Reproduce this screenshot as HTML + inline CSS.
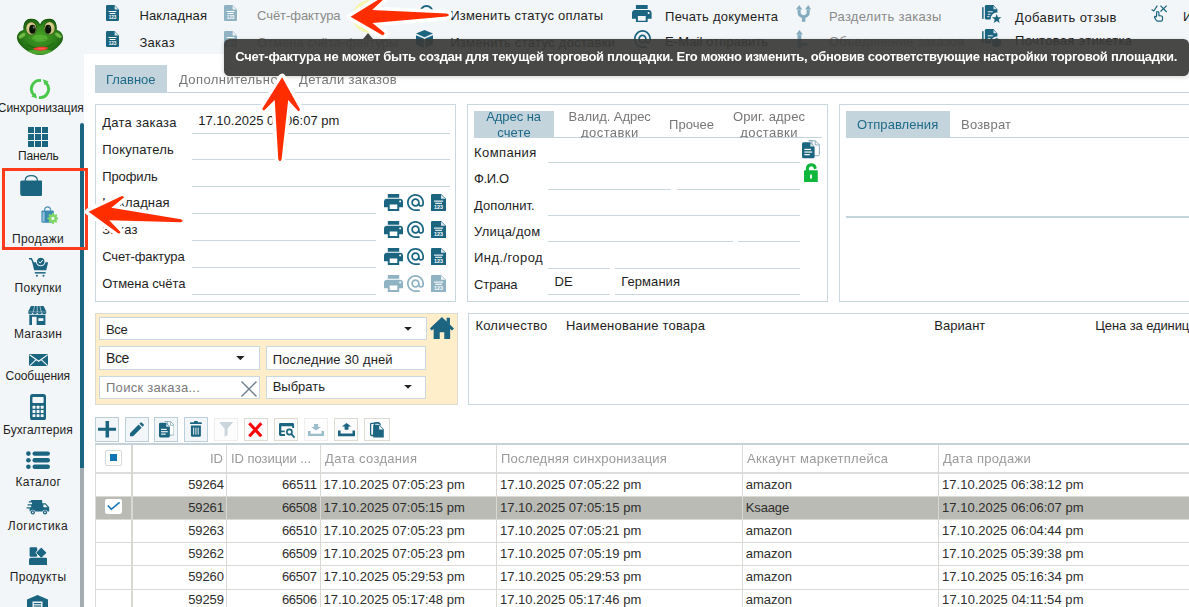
<!DOCTYPE html>
<html lang="ru"><head><meta charset="utf-8"><title>Продажи</title>
<style>
*{box-sizing:border-box;margin:0;padding:0}
html,body{width:1189px;height:607px;overflow:hidden;background:#f3f6f8;font-family:"Liberation Sans",sans-serif;font-size:13px;color:#1e1e1e;letter-spacing:.25px}
.a{position:absolute}
.t{position:absolute;white-space:nowrap;line-height:16px}
.g{color:#8a8a8a}
.ul{position:absolute;height:1px;background:#c9d8df}
.card{position:absolute;border:1px solid #c9d8df;background:#fff}
.sb{position:absolute;left:0;width:76px;text-align:center;white-space:nowrap;line-height:14px;letter-spacing:0}
.num{letter-spacing:.1px}
.inp{position:absolute;background:#fff;border:1px solid #c9d8df}
.btn{position:absolute;top:417.2px;width:24px;height:24.4px;border:1px solid #bccfd8;background:#f3f6f8}
.btn.l{border-color:#dedbd3;background:#fcfcfc;top:417.9px;height:23.5px}.btn.d{border-color:#eeeeec;background:#fdfdfd}
.hl{position:absolute;left:95px;width:1100px;height:1px;background:#dbd9d3}
.vl{position:absolute;top:445px;height:170px;width:2px;background:#dad8d2}
.th{position:absolute;top:451px;white-space:nowrap;color:#9a9a9a;line-height:16px}
.td{position:absolute;white-space:nowrap;line-height:16px;color:#2b2b2b}
</style></head><body>
<div id="sidebar"><svg class="a" style="left:10px;top:10px" width="60" height="52" viewBox="0 0 700 607" >
<defs>
<radialGradient id="fg" cx="50%" cy="48%" r="62%"><stop offset="0" stop-color="#48a228"/><stop offset=".55" stop-color="#2d801a"/><stop offset="1" stop-color="#13500d"/></radialGradient>
<radialGradient id="fe" cx="45%" cy="40%" r="65%"><stop offset="0" stop-color="#eee4a4"/><stop offset="1" stop-color="#b9ad68"/></radialGradient>
<filter id="fb" x="-30%" y="-30%" width="160%" height="160%"><feGaussianBlur stdDeviation="9"/></filter>
<clipPath id="fc"><path d="M350 165C370 120 410 100 465 102C520 104 550 150 545 230C600 250 625 290 618 335C612 395 520 480 420 515C380 530 320 530 280 515C180 480 88 395 82 335C75 290 100 250 158 230C150 150 185 104 240 102C295 100 330 120 350 165Z"/></clipPath>
</defs>
<path d="M350 165C370 120 410 100 465 102C520 104 550 150 545 230C600 250 625 290 618 335C612 395 520 480 420 515C380 530 320 530 280 515C180 480 88 395 82 335C75 290 100 250 158 230C150 150 185 104 240 102C295 100 330 120 350 165Z" fill="url(#fg)"/>
<g clip-path="url(#fc)">
<ellipse cx="140" cy="300" rx="45" ry="22" transform="rotate(-35 140 300)" fill="#8ed458" opacity=".75" filter="url(#fb)"/>
<ellipse cx="565" cy="295" rx="45" ry="22" transform="rotate(35 565 295)" fill="#8ed458" opacity=".75" filter="url(#fb)"/>
<ellipse cx="350" cy="330" rx="90" ry="40" fill="#5cb838" opacity=".7" filter="url(#fb)"/>
<ellipse cx="350" cy="490" rx="170" ry="30" fill="#58b434" opacity=".8" filter="url(#fb)"/>
<path d="M160 230C150 150 185 110 240 108C295 106 325 130 345 175" fill="none" stroke="#124a0c" stroke-width="14" opacity=".55" filter="url(#fb)"/>
<path d="M543 230C550 150 520 110 465 108C410 106 378 130 358 175" fill="none" stroke="#124a0c" stroke-width="14" opacity=".55" filter="url(#fb)"/>
</g>
<ellipse cx="248" cy="213" rx="67" ry="82" fill="#2a5e12"/><ellipse cx="462" cy="210" rx="67" ry="82" fill="#2a5e12"/>
<ellipse cx="248" cy="216" rx="59" ry="73" fill="url(#fe)"/><ellipse cx="462" cy="213" rx="59" ry="73" fill="url(#fe)"/>
<ellipse cx="262" cy="224" rx="38" ry="52" fill="#071404"/><ellipse cx="445" cy="224" rx="36" ry="52" fill="#071404"/>
<ellipse cx="278" cy="200" rx="12" ry="18" fill="#6b7a70" opacity=".8"/><ellipse cx="458" cy="198" rx="9" ry="14" fill="#3b4a40" opacity=".7"/>
<circle cx="287" cy="345" r="5" fill="#145010"/><circle cx="405" cy="345" r="5" fill="#145010"/>
<path d="M195 398C250 440 300 446 350 443C420 440 470 425 512 385" fill="none" stroke="#0f4a0a" stroke-width="7" stroke-linecap="round"/>
<path d="M266 450C320 424 400 424 446 440C425 482 300 486 266 450Z" fill="#ef3a32"/>
<path d="M300 452C330 440 390 440 415 448C400 462 320 464 300 452Z" fill="#ff6258" opacity=".8"/>
</svg><svg class="a" style="left:29px;top:77.9px" width="22" height="22" viewBox="0 0 22 22" ><g fill="none" stroke="#48c848" stroke-width="2.9"><path d="M12.04 2.51A8.55 8.55 0 0 0 4.95 17.05"/><path d="M9.96 19.49A8.55 8.55 0 0 0 17.05 4.95"/></g><path d="M2.3 18.6L8.1 20.5L6.5 15Z" fill="#48c848"/><path d="M13.9 1.25L19.7 3.6L15.5 7Z" fill="#48c848"/></svg><div class="t" style="left:-2.20px;top:100px;letter-spacing:-0.079px;font-size:12px">Синхронизация</div><div class="a" style="left:80px;top:123px;width:4px;height:345px;background:#1b6581;border-radius:2px 2px 0 0"></div><div class="a" style="left:80px;top:468px;width:4px;height:140px;background:#a3adb1"></div><svg class="a" style="left:28px;top:127px" width="20" height="20" viewBox="0 0 20 20" ><rect x="0" y="0" width="6" height="6" fill="#1b6581"/><rect x="7" y="0" width="6" height="6" fill="#1b6581"/><rect x="14" y="0" width="6" height="6" fill="#1b6581"/><rect x="0" y="7" width="6" height="6" fill="#1b6581"/><rect x="7" y="7" width="6" height="6" fill="#1b6581"/><rect x="14" y="7" width="6" height="6" fill="#1b6581"/><rect x="0" y="14" width="6" height="6" fill="#1b6581"/><rect x="7" y="14" width="6" height="6" fill="#1b6581"/><rect x="14" y="14" width="6" height="6" fill="#1b6581"/></svg><div class="t" style="left:17.90px;top:148px;letter-spacing:-0.110px;font-size:12px">Панель</div><svg class="a" style="left:19.6px;top:175px" width="22.6" height="21.4" viewBox="0 0 22.6 21.4" ><path d="M1.8 5.4H20.8Q22.4 5.4 22.4 7V18.6Q22.4 21.2 19.8 21.2H2.8Q.2 21.2 .2 18.6V7Q.2 5.4 1.8 5.4Z" fill="#1b6581"/><path d="M5.2 6.4V5.2Q5.6 .7 11.3 .7Q17 .7 17.4 5.2V6.4" fill="none" stroke="#1b6581" stroke-width="1.2"/></svg><svg class="a" style="left:40.6px;top:205.6px" width="17" height="18" viewBox="0 0 17 18" ><path d="M1.4 4.6H11.8Q12.8 4.6 12.8 5.6V15.6Q12.8 16.8 11.6 16.8H1.6Q.4 16.8 .4 15.6V5.6Q.4 4.6 1.4 4.6Z" fill="#3d8bb3"/><path d="M1.5 6.2H3.6V15.6H1.5Z" fill="#a9cfe2" opacity=".8"/><path d="M3.6 5.4V4Q3.8 .9 6.6 .9Q9.4 .9 9.6 4V5.4" fill="none" stroke="#4f93b5" stroke-width="1.1"/><rect x="10.9" y="6.9" width="2" height="2.2" rx=".6" fill="#7fd76a" transform="rotate(0 11.9 12.4)"/><rect x="10.9" y="6.9" width="2" height="2.2" rx=".6" fill="#7fd76a" transform="rotate(45 11.9 12.4)"/><rect x="10.9" y="6.9" width="2" height="2.2" rx=".6" fill="#7fd76a" transform="rotate(90 11.9 12.4)"/><rect x="10.9" y="6.9" width="2" height="2.2" rx=".6" fill="#7fd76a" transform="rotate(135 11.9 12.4)"/><rect x="10.9" y="6.9" width="2" height="2.2" rx=".6" fill="#7fd76a" transform="rotate(180 11.9 12.4)"/><rect x="10.9" y="6.9" width="2" height="2.2" rx=".6" fill="#7fd76a" transform="rotate(225 11.9 12.4)"/><rect x="10.9" y="6.9" width="2" height="2.2" rx=".6" fill="#7fd76a" transform="rotate(270 11.9 12.4)"/><rect x="10.9" y="6.9" width="2" height="2.2" rx=".6" fill="#7fd76a" transform="rotate(315 11.9 12.4)"/><circle cx="11.9" cy="12.4" r="4.2" fill="#7fd76a"/><circle cx="11.9" cy="12.4" r="1.6" fill="#f3fbef"/></svg><div class="t" style="left:12.10px;top:231px;letter-spacing:0.233px;font-size:12px">Продажи</div><svg class="a" style="left:28.5px;top:257.3px" width="19.4" height="19.8" viewBox="0 0 19.4 19.8" ><path d="M0 1.7H2.4L4.4 6" fill="none" stroke="#1b6581" stroke-width="1.5"/><path d="M3.2 5.2H19.2L17.2 13.3H5.2Z" fill="#1b6581"/><circle cx="11.7" cy="4.5" r="4.3" fill="#1b6581" stroke="#f3f6f8" stroke-width="1.1"/><path d="M9.7 4.6L11.2 6L13.8 3" stroke="#f3f6f8" stroke-width="1" fill="none"/><rect x="5.8" y="15.1" width="10.8" height="1.5" fill="#1b6581"/><circle cx="7.9" cy="18.8" r="1" fill="#1b6581"/><circle cx="14.5" cy="18.8" r="1" fill="#1b6581"/></svg><div class="t" style="left:14.60px;top:280px;letter-spacing:0.308px;font-size:12px">Покупки</div><svg class="a" style="left:28.2px;top:306px" width="18.5" height="19.2" viewBox="0 0 18.5 19.2" ><path d="M2.9 0H15.6L18.5 6Q18.5 8.2 16.2 8.2Q14.1 8.2 13.9 6.6Q13.7 8.2 11.6 8.2Q9.5 8.2 9.25 6.6Q9 8.2 6.9 8.2Q4.8 8.2 4.6 6.6Q4.4 8.2 2.3 8.2Q0 8.2 0 6Z" fill="#1b6581"/><path d="M6.6 0L5.2 6M11.9 0L13.3 6M9.25 0V6" stroke="#f3f6f8" stroke-width=".8" opacity=".75"/><rect x="0" y="5.6" width="18.5" height=".7" fill="#f3f6f8" opacity=".55"/><path d="M1.3 8.8H17.4V19.2H1.3Z" fill="#1b6581"/><rect x="4" y="10.8" width="4.6" height="8.4" fill="#f3f6f8"/><rect x="10.4" y="12.2" width="5" height="2.8" fill="#f3f6f8"/></svg><div class="t" style="left:13.90px;top:326px;letter-spacing:0.267px;font-size:12px">Магазин</div><svg class="a" style="left:28.6px;top:354px" width="19.4" height="12.4" viewBox="0 0 20 13"  preserveAspectRatio="none"><rect width="20" height="13" rx=".8" fill="#1b6581"/><path d="M.6 .8L10 7.6L19.4 .8M.6 12.4L7.4 6M19.4 12.4L12.6 6" fill="none" stroke="#f3f6f8" stroke-width="1.1"/></svg><div class="t" style="left:5.60px;top:368px;letter-spacing:-0.081px;font-size:12px">Сообщения</div><svg class="a" style="left:29.9px;top:394px" width="16" height="26.4" viewBox="0 0 16 26.4" ><rect width="16" height="26.4" rx="2.6" fill="#1b6581"/><rect x="2.4" y="3" width="11.2" height="6" rx=".8" fill="#f3f6f8"/><rect x="2.5" y="11.8" width="2.9" height="2.9" rx=".5" fill="#f3f6f8"/><rect x="6.6" y="11.8" width="2.9" height="2.9" rx=".5" fill="#f3f6f8"/><rect x="10.7" y="11.8" width="2.9" height="2.9" rx=".5" fill="#f3f6f8"/><rect x="2.5" y="16.0" width="2.9" height="2.9" rx=".5" fill="#f3f6f8"/><rect x="6.6" y="16.0" width="2.9" height="2.9" rx=".5" fill="#f3f6f8"/><rect x="10.7" y="16.0" width="2.9" height="2.9" rx=".5" fill="#f3f6f8"/><rect x="2.5" y="20.200000000000003" width="2.9" height="2.9" rx=".5" fill="#f3f6f8"/><rect x="6.6" y="20.200000000000003" width="2.9" height="2.9" rx=".5" fill="#f3f6f8"/><rect x="10.7" y="20.200000000000003" width="2.9" height="2.9" rx=".5" fill="#f3f6f8"/></svg><div class="t" style="left:3.00px;top:422px;letter-spacing:0.040px;font-size:12px">Бухгалтерия</div><svg class="a" style="left:26px;top:451px" width="24" height="19" viewBox="0 0 24 19" ><circle cx="2.4" cy="2.6" r="2.3" fill="#1b6581"/><rect x="6.5" y="0.4" width="17.5" height="4.4" rx="2.2" fill="#1b6581"/><circle cx="2.4" cy="9.2" r="2.3" fill="#1b6581"/><rect x="6.5" y="7.0" width="17.5" height="4.4" rx="2.2" fill="#1b6581"/><circle cx="2.4" cy="15.799999999999999" r="2.3" fill="#1b6581"/><rect x="6.5" y="13.6" width="17.5" height="4.4" rx="2.2" fill="#1b6581"/></svg><div class="t" style="left:15.50px;top:474px;letter-spacing:0.275px;font-size:12px">Каталог</div><svg class="a" style="left:26.4px;top:500.2px" width="23.4" height="15" viewBox="0 0 23.4 15" ><path d="M5.4 0H15.6Q16.2 0 16.2 .6V3.2H19.6L23.2 7.2V11.6H21.6A2.7 2.7 0 0 0 16.4 11.6H9.4A2.7 2.7 0 0 0 4.2 11.6H3.6V8.6H.6V7.2H5.2V5.6H1.6V4.2H6V2.6H2.8V1.2H4.8Q4.8 0 5.4 0Z" fill="#1b6581"/><circle cx="6.8" cy="12.4" r="2.1" fill="#1b6581"/><circle cx="19" cy="12.4" r="2.1" fill="#1b6581"/><circle cx="6.8" cy="12.4" r=".8" fill="#f3f6f8"/><circle cx="19" cy="12.4" r=".8" fill="#f3f6f8"/><path d="M17.4 4.4H19.2L21.6 7.2H17.4Z" fill="#f3f6f8"/></svg><div class="t" style="left:7.80px;top:518px;letter-spacing:0.494px;font-size:12px">Логистика</div><svg class="a" style="left:28.8px;top:546.7px" width="18.6" height="18.5" viewBox="0 0 18.6 18.5" ><rect x=".6" y=".3" width="7.6" height="9.4" rx="1.2" fill="#1b6581"/><rect x="8.3" y="1.7" width="8" height="8" rx="1.1" transform="rotate(45 12.3 5.7)" fill="#1b6581" stroke="#f3f6f8" stroke-width=".9"/><rect x="0" y="10.8" width="18.6" height="7.7" rx="2" fill="#1b6581"/></svg><div class="t" style="left:9.80px;top:569px;letter-spacing:0.286px;font-size:12px">Продукты</div><svg class="a" style="left:27px;top:595px" width="21" height="14" viewBox="0 0 21 14" ><path d="M10.5 0L21 4.5V14H0V4.5Z" fill="#1b6581"/><rect x="5.5" y="6.5" width="10" height="8" fill="#f3f6f8"/><rect x="6.8" y="8" width="7.4" height="1.2" fill="#1b6581"/><rect x="6.8" y="10.4" width="7.4" height="1.2" fill="#1b6581"/></svg></div><!--/sidebar-->
<div class="a" style="left:84px;top:54px;width:1110px;height:560px;background:#fff"></div>
<div id="toolbar"><svg class="a" style="left:106px;top:5px" width="13" height="16" viewBox="0 0 13 16"  preserveAspectRatio="none"><path d="M1.2 0H8.6L13 4.4V14.8Q13 16 11.8 16H1.2Q0 16 0 14.8V1.2Q0 0 1.2 0Z" fill="#1b6581"/><path d="M8.6 0.6V4.4H12.4Z" fill="#fff" opacity=".85"/><rect x="2.6" y="6" width="7.8" height="1" fill="#fff"/><rect x="3.6" y="8" width="5.8" height="1" fill="#fff"/><text x="6.5" y="13.9" font-family="Liberation Sans, sans-serif" font-size="4.6" font-weight="700" fill="#fff" text-anchor="middle" letter-spacing="0">123</text></svg><svg class="a" style="left:106px;top:31px" width="13" height="16" viewBox="0 0 13 16"  preserveAspectRatio="none"><path d="M1.2 0H8.6L13 4.4V14.8Q13 16 11.8 16H1.2Q0 16 0 14.8V1.2Q0 0 1.2 0Z" fill="#1b6581"/><path d="M8.6 0.6V4.4H12.4Z" fill="#fff" opacity=".85"/><rect x="2.6" y="6" width="7.8" height="1" fill="#fff"/><rect x="3.6" y="8" width="5.8" height="1" fill="#fff"/><text x="6.5" y="13.9" font-family="Liberation Sans, sans-serif" font-size="4.6" font-weight="700" fill="#fff" text-anchor="middle" letter-spacing="0">123</text></svg><div class="t" style="left:139.40px;top:8px;letter-spacing:0.162px">Накладная</div><div class="t" style="left:139.40px;top:35px;letter-spacing:0.300px">Заказ</div><svg class="a" style="left:224px;top:5px" width="13" height="16" viewBox="0 0 13 16"  preserveAspectRatio="none"><path d="M1.2 0H8.6L13 4.4V14.8Q13 16 11.8 16H1.2Q0 16 0 14.8V1.2Q0 0 1.2 0Z" fill="#8fb3c3"/><path d="M8.6 0.6V4.4H12.4Z" fill="#fff" opacity=".85"/><rect x="2.6" y="6" width="7.8" height="1" fill="#fff"/><rect x="3.6" y="8" width="5.8" height="1" fill="#fff"/><text x="6.5" y="13.9" font-family="Liberation Sans, sans-serif" font-size="4.6" font-weight="700" fill="#fff" text-anchor="middle" letter-spacing="0">123</text></svg><svg class="a" style="left:224px;top:31px" width="13" height="16" viewBox="0 0 13 16"  preserveAspectRatio="none"><path d="M1.2 0H8.6L13 4.4V14.8Q13 16 11.8 16H1.2Q0 16 0 14.8V1.2Q0 0 1.2 0Z" fill="#8fb3c3"/><path d="M8.6 0.6V4.4H12.4Z" fill="#fff" opacity=".85"/><rect x="2.6" y="6" width="7.8" height="1" fill="#fff"/><rect x="3.6" y="8" width="5.8" height="1" fill="#fff"/><text x="6.5" y="13.9" font-family="Liberation Sans, sans-serif" font-size="4.6" font-weight="700" fill="#fff" text-anchor="middle" letter-spacing="0">123</text></svg><div class="t" style="left:257.00px;top:8px;letter-spacing:-0.055px;color:#8a8a8a">Счёт-фактура</div><div class="t" style="left:257.00px;top:35px;letter-spacing:0.034px;color:#8a8a8a">Отмена счёта-фактуры</div><svg class="a" style="left:416px;top:3px" width="20" height="20" viewBox="0 0 20 20" ><circle cx="10.5" cy="9" r="6" fill="none" stroke="#1b6581" stroke-width="1.8"/></svg><svg class="a" style="left:416px;top:30px" width="17" height="18" viewBox="0 0 17 18" ><path d="M8.5 0L17 3.6L8.5 7.2L0 3.6Z" fill="#1b6581"/><path d="M0 5.2L7.8 8.5V18L0 14.4Z" fill="#1b6581"/><path d="M17 5.2L9.2 8.5V18L17 14.4Z" fill="#1b6581"/></svg><div class="t" style="left:450.20px;top:8px;letter-spacing:0.231px">Изменить статус оплаты</div><div class="t" style="left:450.20px;top:35px;letter-spacing:0.283px">Изменить статус доставки</div><svg class="a" style="left:632px;top:4.6px" width="19.6" height="17.8" viewBox="2 3 20 18"  preserveAspectRatio="none"><path d="M19 8H5c-1.66 0-3 1.34-3 3v6h4v4h12v-4h4v-6c0-1.66-1.34-3-3-3zm-3 11H8v-5h8v5zm3-7c-.55 0-1-.45-1-1s.45-1 1-1 1 .45 1 1-.45 1-1 1zm-1-9H6v4h12V3z" fill="#1b6581"/></svg><svg class="a" style="left:634px;top:30px" width="17" height="18" viewBox="2 2 20 20"  preserveAspectRatio="none"><path d="M12 2C6.48 2 2 6.48 2 12s4.48 10 10 10h5v-2h-5c-4.34 0-8-3.66-8-8s3.66-8 8-8 8 3.66 8 8v1.43c0 .79-.71 1.57-1.5 1.57s-1.5-.78-1.5-1.57V12c0-2.76-2.24-5-5-5s-5 2.24-5 5 2.24 5 5 5c1.38 0 2.64-.56 3.54-1.47.65.89 1.77 1.47 2.96 1.47 1.97 0 3.5-1.6 3.5-3.57V12c0-5.52-4.48-10-10-10zm0 13c-1.66 0-3-1.34-3-3s1.34-3 3-3 3 1.34 3 3-1.34 3-3 3z" fill="#1b6581"/></svg><div class="t" style="left:665.10px;top:9px;letter-spacing:0.227px">Печать документа</div><div class="t" style="left:665.10px;top:34px;letter-spacing:0.083px">E-Mail отправить</div><svg class="a" style="left:795.5px;top:4.9px" width="15.3" height="16.8" viewBox="0 0 15.3 16.8" ><path d="M3.1 0L6.3 4.6H0Z" fill="#85acbd"/><path d="M12.2 0L15.3 4.6H9.1Z" fill="#85acbd"/><path d="M3.1 4.4V7.4Q3.1 10.8 7.65 11.8Q12.2 10.8 12.2 7.4V4.4" fill="none" stroke="#85acbd" stroke-width="3.1"/><rect x="5.9" y="11.2" width="3.5" height="5.6" fill="#85acbd"/></svg><svg class="a" style="left:795.9px;top:30px" width="15" height="18" viewBox="0 0 15 18" ><path d="M3.4 0L6.9 4.6H0Z" fill="#85acbd"/><rect x="1.5" y="4.4" width="3.8" height="13.6" fill="#85acbd"/><path d="M5 13H11.5V16.2H5Z" fill="#85acbd"/></svg><div class="t" style="left:829.00px;top:9px;letter-spacing:0.287px;color:#8a8a8a">Разделить заказы</div><div class="t" style="left:829.00px;top:34px;letter-spacing:0.119px;color:#8a8a8a">Объединение заказов</div><svg class="a" style="left:982px;top:4.9px" width="20.4" height="19.2" viewBox="0 0 20.4 19.2" ><rect x=".1" y="2.2" width="1.5" height="11.7" fill="#1b6581"/><path d="M4.2 0H11.4L15.4 4.4V14.5H4.2Q2.9 14.5 2.9 13.2V1.3Q2.9 0 4.2 0Z" fill="#1b6581"/><path d="M11.5 .9V4.3H14.7Z" fill="#f3f6f8" opacity=".9"/><rect x="5.8" y="6.3" width="5" height="1" fill="#f3f6f8"/><rect x="5.8" y="8.9" width="2.7" height=".9" fill="#f3f6f8"/><rect x="5.2" y="11.2" width="2.3" height=".9" fill="#f3f6f8"/><circle cx="14.7" cy="13.7" r="6.1" fill="#f3f6f8"/><path d="M14.70 8.90L15.93 12.20L19.46 12.35L16.70 14.55L17.64 17.95L14.70 16.00L11.76 17.95L12.70 14.55L9.94 12.35L13.47 12.20Z" fill="#1b6581"/></svg><svg class="a" style="left:982px;top:29px" width="20.4" height="19.2" viewBox="0 0 20.4 19.2" ><rect x=".1" y="2.2" width="1.5" height="11.7" fill="#1b6581"/><path d="M4.2 0H11.4L15.4 4.4V14.5H4.2Q2.9 14.5 2.9 13.2V1.3Q2.9 0 4.2 0Z" fill="#1b6581"/><path d="M11.5 .9V4.3H14.7Z" fill="#f3f6f8" opacity=".9"/><rect x="5.8" y="6.3" width="5" height="1" fill="#f3f6f8"/><rect x="5.8" y="8.9" width="2.7" height=".9" fill="#f3f6f8"/><rect x="5.2" y="11.2" width="2.3" height=".9" fill="#f3f6f8"/><circle cx="14.7" cy="13.7" r="6.1" fill="#f3f6f8"/><path d="M14.7 9L19 11V16.2L14.7 18.4L10.4 16.2V11Z" fill="#1b6581"/></svg><div class="t" style="left:1015.10px;top:10px;letter-spacing:0.396px">Добавить отзыв</div><div class="t" style="left:1015.10px;top:33px;letter-spacing:0.306px">Почтовая этикетка</div><svg class="a" style="left:1150.6px;top:4.6px" width="17" height="17" viewBox="0 0 17 17" ><path d="M.6 4.5L2.8 6L6.3 .6" fill="none" stroke="#1b6581" stroke-width="1.2"/><path d="M9.5 .6L15.7 7M15.7 .6L9.5 6.5" stroke="#1b6581" stroke-width="1.2"/><path d="M5.6 11.6V7.6Q5.6 6.5 6.75 6.5Q7.9 6.5 7.9 7.6V10.6L10.6 11Q11.5 11.2 11.5 12.1V14.6Q11.5 16.2 9.9 16.2H7Q5.8 16.2 5.2 15.2L3.6 12.6Q3.2 11.6 4.2 11.3Q5 11.2 5.6 12.2" fill="none" stroke="#1b6581" stroke-width="1.2" stroke-linejoin="round"/></svg><div class="t" style="left:1183.10px;top:9px;letter-spacing:0.000px">Импорт</div></div><!--/toolbar-->
<div id="tabs"><div class="a" style="left:95px;top:92px;width:1100px;height:1px;background:#c3d4dc"></div><div class="a" style="left:95px;top:65px;width:72px;height:28px;background:#c3d4dc"></div><div class="t" style="left:106.10px;top:72px;letter-spacing:-0.025px;color:#1f6a88;will-change:transform">Главное</div><div class="t" style="left:178.60px;top:72px;letter-spacing:0.421px;color:#777;will-change:transform">Дополнительно</div><div class="t" style="left:298.90px;top:72px;letter-spacing:0.338px;color:#777;will-change:transform">Детали заказов</div></div><!--/tabs-->
<div id="cards"><div class="card" style="left:95px;top:104px;width:361px;height:198px"></div><div class="t" style="left:102.20px;top:115px;letter-spacing:0.245px">Дата заказа</div><div class="ul" style="left:192px;top:132.9px;width:258px"></div><div class="t" style="left:102.20px;top:142px;letter-spacing:0.206px">Покупатель</div><div class="ul" style="left:192px;top:159.2px;width:258px"></div><div class="t" style="left:102.20px;top:169px;letter-spacing:-0.100px">Профиль</div><div class="ul" style="left:192px;top:185.5px;width:258px"></div><div class="t" style="left:102.20px;top:195px;letter-spacing:0.138px">Накладная</div><div class="ul" style="left:192px;top:212.7px;width:184px"></div><svg class="a" style="left:384px;top:194px" width="19" height="17" viewBox="2 3 20 18"  preserveAspectRatio="none"><path d="M19 8H5c-1.66 0-3 1.34-3 3v6h4v4h12v-4h4v-6c0-1.66-1.34-3-3-3zm-3 11H8v-5h8v5zm3-7c-.55 0-1-.45-1-1s.45-1 1-1 1 .45 1 1-.45 1-1 1zm-1-9H6v4h12V3z" fill="#1b6581"/></svg><svg class="a" style="left:407px;top:194px" width="17" height="17" viewBox="2 2 20 20"  preserveAspectRatio="none"><path d="M12 2C6.48 2 2 6.48 2 12s4.48 10 10 10h5v-2h-5c-4.34 0-8-3.66-8-8s3.66-8 8-8 8 3.66 8 8v1.43c0 .79-.71 1.57-1.5 1.57s-1.5-.78-1.5-1.57V12c0-2.76-2.24-5-5-5s-5 2.24-5 5 2.24 5 5 5c1.38 0 2.64-.56 3.54-1.47.65.89 1.77 1.47 2.96 1.47 1.97 0 3.5-1.6 3.5-3.57V12c0-5.52-4.48-10-10-10zm0 13c-1.66 0-3-1.34-3-3s1.34-3 3-3 3 1.34 3 3-1.34 3-3 3z" fill="#1b6581"/></svg><svg class="a" style="left:431px;top:193.7px" width="15.2" height="17.5" viewBox="0 0 13 16"  preserveAspectRatio="none"><path d="M1.2 0H8.6L13 4.4V14.8Q13 16 11.8 16H1.2Q0 16 0 14.8V1.2Q0 0 1.2 0Z" fill="#1b6581"/><path d="M8.6 0.6V4.4H12.4Z" fill="#fff" opacity=".85"/><rect x="2.6" y="6" width="7.8" height="1" fill="#fff"/><rect x="3.6" y="8" width="5.8" height="1" fill="#fff"/><text x="6.5" y="13.9" font-family="Liberation Sans, sans-serif" font-size="4.6" font-weight="700" fill="#fff" text-anchor="middle" letter-spacing="0">123</text></svg><div class="t" style="left:102.20px;top:222px;letter-spacing:0.300px">Заказ</div><div class="ul" style="left:192px;top:239.8px;width:184px"></div><svg class="a" style="left:384px;top:221px" width="19" height="17" viewBox="2 3 20 18"  preserveAspectRatio="none"><path d="M19 8H5c-1.66 0-3 1.34-3 3v6h4v4h12v-4h4v-6c0-1.66-1.34-3-3-3zm-3 11H8v-5h8v5zm3-7c-.55 0-1-.45-1-1s.45-1 1-1 1 .45 1 1-.45 1-1 1zm-1-9H6v4h12V3z" fill="#1b6581"/></svg><svg class="a" style="left:407px;top:221px" width="17" height="17" viewBox="2 2 20 20"  preserveAspectRatio="none"><path d="M12 2C6.48 2 2 6.48 2 12s4.48 10 10 10h5v-2h-5c-4.34 0-8-3.66-8-8s3.66-8 8-8 8 3.66 8 8v1.43c0 .79-.71 1.57-1.5 1.57s-1.5-.78-1.5-1.57V12c0-2.76-2.24-5-5-5s-5 2.24-5 5 2.24 5 5 5c1.38 0 2.64-.56 3.54-1.47.65.89 1.77 1.47 2.96 1.47 1.97 0 3.5-1.6 3.5-3.57V12c0-5.52-4.48-10-10-10zm0 13c-1.66 0-3-1.34-3-3s1.34-3 3-3 3 1.34 3 3-1.34 3-3 3z" fill="#1b6581"/></svg><svg class="a" style="left:431px;top:220.7px" width="15.2" height="17.5" viewBox="0 0 13 16"  preserveAspectRatio="none"><path d="M1.2 0H8.6L13 4.4V14.8Q13 16 11.8 16H1.2Q0 16 0 14.8V1.2Q0 0 1.2 0Z" fill="#1b6581"/><path d="M8.6 0.6V4.4H12.4Z" fill="#fff" opacity=".85"/><rect x="2.6" y="6" width="7.8" height="1" fill="#fff"/><rect x="3.6" y="8" width="5.8" height="1" fill="#fff"/><text x="6.5" y="13.9" font-family="Liberation Sans, sans-serif" font-size="4.6" font-weight="700" fill="#fff" text-anchor="middle" letter-spacing="0">123</text></svg><div class="t" style="left:102.20px;top:249px;letter-spacing:-0.118px">Счет-фактура</div><div class="ul" style="left:192px;top:266.9px;width:184px"></div><svg class="a" style="left:384px;top:248px" width="19" height="17" viewBox="2 3 20 18"  preserveAspectRatio="none"><path d="M19 8H5c-1.66 0-3 1.34-3 3v6h4v4h12v-4h4v-6c0-1.66-1.34-3-3-3zm-3 11H8v-5h8v5zm3-7c-.55 0-1-.45-1-1s.45-1 1-1 1 .45 1 1-.45 1-1 1zm-1-9H6v4h12V3z" fill="#1b6581"/></svg><svg class="a" style="left:407px;top:248px" width="17" height="17" viewBox="2 2 20 20"  preserveAspectRatio="none"><path d="M12 2C6.48 2 2 6.48 2 12s4.48 10 10 10h5v-2h-5c-4.34 0-8-3.66-8-8s3.66-8 8-8 8 3.66 8 8v1.43c0 .79-.71 1.57-1.5 1.57s-1.5-.78-1.5-1.57V12c0-2.76-2.24-5-5-5s-5 2.24-5 5 2.24 5 5 5c1.38 0 2.64-.56 3.54-1.47.65.89 1.77 1.47 2.96 1.47 1.97 0 3.5-1.6 3.5-3.57V12c0-5.52-4.48-10-10-10zm0 13c-1.66 0-3-1.34-3-3s1.34-3 3-3 3 1.34 3 3-1.34 3-3 3z" fill="#1b6581"/></svg><svg class="a" style="left:431px;top:247.7px" width="15.2" height="17.5" viewBox="0 0 13 16"  preserveAspectRatio="none"><path d="M1.2 0H8.6L13 4.4V14.8Q13 16 11.8 16H1.2Q0 16 0 14.8V1.2Q0 0 1.2 0Z" fill="#1b6581"/><path d="M8.6 0.6V4.4H12.4Z" fill="#fff" opacity=".85"/><rect x="2.6" y="6" width="7.8" height="1" fill="#fff"/><rect x="3.6" y="8" width="5.8" height="1" fill="#fff"/><text x="6.5" y="13.9" font-family="Liberation Sans, sans-serif" font-size="4.6" font-weight="700" fill="#fff" text-anchor="middle" letter-spacing="0">123</text></svg><div class="t" style="left:102.20px;top:276px;letter-spacing:-0.032px">Отмена счёта</div><div class="ul" style="left:192px;top:293.9px;width:184px"></div><svg class="a" style="left:384px;top:275px" width="19" height="17" viewBox="2 3 20 18"  preserveAspectRatio="none"><path d="M19 8H5c-1.66 0-3 1.34-3 3v6h4v4h12v-4h4v-6c0-1.66-1.34-3-3-3zm-3 11H8v-5h8v5zm3-7c-.55 0-1-.45-1-1s.45-1 1-1 1 .45 1 1-.45 1-1 1zm-1-9H6v4h12V3z" fill="#8fb3c3"/></svg><svg class="a" style="left:407px;top:275px" width="17" height="17" viewBox="2 2 20 20"  preserveAspectRatio="none"><path d="M12 2C6.48 2 2 6.48 2 12s4.48 10 10 10h5v-2h-5c-4.34 0-8-3.66-8-8s3.66-8 8-8 8 3.66 8 8v1.43c0 .79-.71 1.57-1.5 1.57s-1.5-.78-1.5-1.57V12c0-2.76-2.24-5-5-5s-5 2.24-5 5 2.24 5 5 5c1.38 0 2.64-.56 3.54-1.47.65.89 1.77 1.47 2.96 1.47 1.97 0 3.5-1.6 3.5-3.57V12c0-5.52-4.48-10-10-10zm0 13c-1.66 0-3-1.34-3-3s1.34-3 3-3 3 1.34 3 3-1.34 3-3 3z" fill="#8fb3c3"/></svg><svg class="a" style="left:431px;top:274.7px" width="15.2" height="17.5" viewBox="0 0 13 16"  preserveAspectRatio="none"><path d="M1.2 0H8.6L13 4.4V14.8Q13 16 11.8 16H1.2Q0 16 0 14.8V1.2Q0 0 1.2 0Z" fill="#8fb3c3"/><path d="M8.6 0.6V4.4H12.4Z" fill="#fff" opacity=".85"/><rect x="2.6" y="6" width="7.8" height="1" fill="#fff"/><rect x="3.6" y="8" width="5.8" height="1" fill="#fff"/><text x="6.5" y="13.9" font-family="Liberation Sans, sans-serif" font-size="4.6" font-weight="700" fill="#fff" text-anchor="middle" letter-spacing="0">123</text></svg><div class="t" style="left:198.30px;top:113px;letter-spacing:0.002px">17.10.2025 06:06:07 pm</div><div class="card" style="left:467px;top:104px;width:361px;height:198px"></div><div class="a" style="left:474px;top:137px;width:348px;height:1px;background:#c3d4dc"></div><div class="a" style="left:474px;top:111px;width:80px;height:26.5px;background:#c3d4dc"></div><div class="a" style="left:470px;top:105px;width:356px;height:32.5px;overflow:hidden;will-change:transform"><div class="t" style="left:16.20px;top:4px;letter-spacing:-0.050px;color:#1f6a88">Адрес на</div><div class="t" style="left:27.30px;top:20px;letter-spacing:0.087px;color:#1f6a88">счете</div><div class="t" style="left:98.60px;top:4px;letter-spacing:-0.050px;color:#777">Валид. Адрес</div><div class="t" style="left:111.10px;top:20px;letter-spacing:0.414px;color:#777">доставки</div><div class="t" style="left:262.90px;top:4px;letter-spacing:0.145px;color:#777">Ориг. адрес</div><div class="t" style="left:270.30px;top:20px;letter-spacing:0.414px;color:#777">доставки</div></div><div class="t" style="left:668.70px;top:117px;letter-spacing:0.050px;color:#777;will-change:transform">Прочее</div><div class="t" style="left:474.10px;top:145px;letter-spacing:0.386px">Компания</div><div class="ul" style="left:548px;top:161.7px;width:252px"></div><div class="t" style="left:474.10px;top:171px;letter-spacing:-0.387px">Ф.И.О</div><div class="ul" style="left:548px;top:188.9px;width:123px"></div><div class="ul" style="left:677px;top:188.9px;width:123px"></div><div class="t" style="left:474.10px;top:198px;letter-spacing:0.025px">Дополнит.</div><div class="ul" style="left:548px;top:214.5px;width:252px"></div><div class="t" style="left:474.10px;top:224px;letter-spacing:0.213px">Улица/дом</div><div class="ul" style="left:548px;top:240.6px;width:184.5px"></div><div class="ul" style="left:738px;top:240.6px;width:62px"></div><div class="t" style="left:474.10px;top:250px;letter-spacing:0.411px">Инд./город</div><div class="ul" style="left:548px;top:267.8px;width:62px"></div><div class="ul" style="left:615px;top:267.8px;width:185px"></div><div class="t" style="left:474.10px;top:277px;letter-spacing:-0.150px">Страна</div><div class="ul" style="left:548px;top:293.9px;width:62px"></div><div class="ul" style="left:615px;top:293.9px;width:185px"></div><div class="t" style="left:554.60px;top:274px;letter-spacing:0.000px">DE</div><div class="t" style="left:621.30px;top:274px;letter-spacing:0.057px">Германия</div><svg class="a" style="left:802px;top:140px" width="18" height="18.5" viewBox="0 0 18 18" ><path d="M6.7 .5H13.4L17.4 4.5V14.2Q17.4 15.5 16.1 15.5H10V.5Z" fill="#fff" stroke="#7fa3b3" stroke-width=".9"/><path d="M13.2 .8V4.7H17.1" fill="none" stroke="#7fa3b3" stroke-width=".9"/><path d="M1.5 2H8.2L12.6 6.4V16.5Q12.6 18 11.1 18H1.5Q0 18 0 16.5V3.5Q0 2 1.5 2Z" fill="#1b6581"/><path d="M8.4 2.7V6.3H12Z" fill="#fff" opacity=".85"/><rect x="2.4" y="8.6" width="6.6" height="1.2" fill="#fff"/><rect x="2.4" y="11.2" width="7.8" height="1.2" fill="#fff"/><rect x="2.4" y="13.8" width="5.4" height="1.2" fill="#fff"/></svg><svg class="a" style="left:804.2px;top:162.8px" width="14" height="19.2" viewBox="0 0 14 19.2" ><rect x="0" y="7.2" width="13.8" height="12" rx=".8" fill="#0eb73a"/><path d="M3.4 8V5.8Q3.4 1.7 7.2 1.7Q10.4 1.7 11.1 4.6" fill="none" stroke="#0eb73a" stroke-width="3.1" stroke-linecap="round"/><path d="M6.2 11.6H7.8L8 15.6H6Z" fill="#fff"/></svg><div class="card" style="left:839px;top:104px;width:360px;height:198px"></div><div class="a" style="left:846px;top:137px;width:350px;height:1px;background:#c3d4dc"></div><div class="a" style="left:846px;top:111px;width:104px;height:26.5px;background:#c3d4dc"></div><div class="t" style="left:857.00px;top:117px;letter-spacing:0.075px;color:#1f6a88;will-change:transform">Отправления</div><div class="t" style="left:961.40px;top:117px;letter-spacing:0.208px;color:#777;will-change:transform">Возврат</div><div class="a" style="left:846px;top:216px;width:350px;height:1.5px;background:#c3d4dc"></div></div><!--/cards-->
<div id="filter"><div class="a" style="left:95px;top:313px;width:363px;height:92px;background:#ffeec9;border:1px solid #d9dcd3"></div><div class="inp" style="left:99px;top:317px;width:328px;height:23px"></div><div class="inp" style="left:99px;top:346px;width:161px;height:24px"></div><div class="inp" style="left:99px;top:376px;width:161px;height:23px"></div><div class="inp" style="left:266px;top:346px;width:160px;height:24px"></div><div class="inp" style="left:266px;top:376px;width:160px;height:23px"></div><div class="t" style="left:106.00px;top:322px;letter-spacing:-0.350px">Все</div><div class="t" style="left:106.00px;top:350px;letter-spacing:-0.450px;font-size:14px">Все</div><div class="t" style="left:106.00px;top:380px;letter-spacing:0.279px;color:#7a7a7a">Поиск заказа...</div><div class="t" style="left:272.70px;top:352px;letter-spacing:0.131px">Последние 30 дней</div><div class="t" style="left:272.70px;top:379px;letter-spacing:-0.025px">Выбрать</div><svg class="a" style="left:404.4px;top:327px" width="8" height="3.8" viewBox="0 0 8 4" ><path d="M0 0H8L4 4Z" fill="#222"/></svg><svg class="a" style="left:236.3px;top:356px" width="8.8" height="4.2" viewBox="0 0 8 4" ><path d="M0 0H8L4 4Z" fill="#222"/></svg><svg class="a" style="left:404.4px;top:385px" width="8" height="3.8" viewBox="0 0 8 4" ><path d="M0 0H8L4 4Z" fill="#222"/></svg><svg class="a" style="left:240.6px;top:380.6px" width="16" height="16" viewBox="0 0 16 16" ><path d="M.5 .5L15.5 15.5M15.5 .5L.5 15.5" stroke="#6a7d8e" stroke-width="1.3"/></svg><svg class="a" style="left:430.3px;top:316.6px" width="23.8" height="22.6" viewBox="0 0 24 23" ><path d="M12 0L24.3 11.6L22.4 13.8L20.4 12.1H3.6L1.6 13.8L-.3 11.6Z" fill="#1b6581"/><path d="M16.8 .8H20.2V8.4L16.8 5.2Z" fill="#1b6581"/><path d="M3.6 12H20.4V23H14.4V15.6H9.8V23H3.6Z" fill="#1b6581"/></svg><div class="card" style="left:468px;top:313px;width:740px;height:92px"></div><div class="t" style="left:475.40px;top:318px;letter-spacing:0.233px">Количество</div><div class="t" style="left:566.00px;top:318px;letter-spacing:0.208px">Наименование товара</div><div class="t" style="left:934.30px;top:318px;letter-spacing:0.042px">Вариант</div><div class="t" style="left:1095.30px;top:318px;letter-spacing:-0.104px">Цена за единицу</div></div><!--/filter-->
<div id="table"><div class="btn" style="left:95.1px;width:24px"></div><div class="btn" style="left:125px;width:24px"></div><div class="btn" style="left:154.4px;width:24px"></div><div class="btn" style="left:184px;width:24px"></div><div class="btn l d" style="left:214.1px;width:24px"></div><div class="btn l" style="left:243.6px;width:24px"></div><div class="btn l" style="left:274px;width:24px"></div><div class="btn l d" style="left:303.5px;width:24px"></div><div class="btn l" style="left:334.2px;width:24px"></div><div class="btn l" style="left:364.2px;width:26px"></div><svg class="a" style="left:97.8px;top:421.2px" width="18.6" height="16.6" viewBox="0 0 20 20"  preserveAspectRatio="none"><path d="M8.1 0H11.9V8.1H20V11.9H11.9V20H8.1V11.9H0V8.1H8.1Z" fill="#1b6581"/></svg><svg class="a" style="left:129.5px;top:422.2px" width="14" height="14.5" viewBox="0 0 16 16" ><path d="M0 16V12.5L9.8 2.7L13.3 6.2L3.5 16Z" fill="#1b6581"/><path d="M10.8 1.7L12.2 .3Q12.7 -.2 13.3 .3L15.7 2.7Q16.2 3.3 15.7 3.8L14.3 5.2Z" fill="#1b6581"/></svg><svg class="a" style="left:158.6px;top:421.4px" width="15.5" height="16.4" viewBox="0 0 18 18"  preserveAspectRatio="none"><path d="M6.7 .5H13.4L17.4 4.5V14.2Q17.4 15.5 16.1 15.5H10V.5Z" fill="#fff" stroke="#7fa3b3" stroke-width=".9"/><path d="M13.2 .8V4.7H17.1" fill="none" stroke="#7fa3b3" stroke-width=".9"/><path d="M1.5 2H8.2L12.6 6.4V16.5Q12.6 18 11.1 18H1.5Q0 18 0 16.5V3.5Q0 2 1.5 2Z" fill="#1b6581"/><path d="M8.4 2.7V6.3H12Z" fill="#fff" opacity=".85"/><rect x="2.4" y="8.6" width="6.6" height="1.2" fill="#fff"/><rect x="2.4" y="11.2" width="7.8" height="1.2" fill="#fff"/><rect x="2.4" y="13.8" width="5.4" height="1.2" fill="#fff"/></svg><svg class="a" style="left:190.4px;top:421.4px" width="11.8" height="15.8" viewBox="0 0 13 18"  preserveAspectRatio="none"><path d="M4.5 0H8.5V1.5H12.5Q13 1.5 13 2V3.5H0V2Q0 1.5 .5 1.5H4.5Z" fill="#1b6581"/><path d="M1 5H12V16.5Q12 18 10.5 18H2.5Q1 18 1 16.5Z" fill="#1b6581"/><path d="M4 7.5V15.5M6.5 7.5V15.5M9 7.5V15.5" stroke="#f3f6f8" stroke-width="1.1"/></svg><svg class="a" style="left:218.5px;top:422.3px" width="14.2" height="14.8" viewBox="0 0 14 17"  preserveAspectRatio="none"><path d="M0 0H14L8.5 7.5V15L5.5 17V7.5Z" fill="#c9d6dc"/></svg><svg class="a" style="left:248.2px;top:421.8px" width="14.6" height="15.6" viewBox="0 0 14.6 15.6" ><path d="M1.3 1.3L13.3 14.3M13.3 1.3L1.3 14.3" stroke="#f80808" stroke-width="3.1"/></svg><svg class="a" style="left:278.8px;top:423.4px" width="16.4" height="15.4" viewBox="0 0 16.4 15.4" ><path d="M1.4 0H13.7Q15.1 0 15.1 1.4V5H13.2V3.3H2.3V11.1H6V12.9H1.4Q0 12.9 0 11.5V1.4Q0 0 1.4 0Z" fill="#1b6581"/><rect x="2" y="7.6" width="3.8" height="1.6" fill="#1b6581"/><circle cx="10.4" cy="9" r="2.6" fill="none" stroke="#1b6581" stroke-width="1.6"/><path d="M12.2 10.9L15.6 14.6" stroke="#1b6581" stroke-width="1.8"/></svg><svg class="a" style="left:308px;top:423.8px" width="16.2" height="12.4" viewBox="0 0 16.2 12.4" ><path d="M6 0H10.2V3H13L8.1 6.6L3.2 3H6Z" fill="#9dbccb"/><path d="M0 7H2.6V9.8H13.6V7H16.2V12.4H0Z" fill="#9dbccb"/></svg><svg class="a" style="left:338px;top:423.4px" width="17.1" height="13.2" viewBox="0 0 17.1 13.2" ><path d="M6.6 6.8H10.5V3.4H13.2L8.55 0L3.9 3.4H6.6Z" fill="#1b6581"/><path d="M0 7.4H2.6V10.4H14.5V7.4H17.1V13.2H0Z" fill="#1b6581"/></svg><svg class="a" style="left:369.9px;top:422px" width="14" height="15.8" viewBox="0 0 14 15.8" ><path d="M4.6 .9H8.8V1.4H9.2Q10.1 1.4 10.1 2.3V3.2M3.4 13.5H1.5Q.6 13.5 .6 12.6V2.3Q.6 1.4 1.5 1.4H4.6Z" fill="none" stroke="#1b6581" stroke-width="1.3"/><rect x="4.4" y="0" width="4.6" height="1.6" rx=".5" fill="#1b6581"/><path d="M3.3 2.8H9.4L13.8 7.2V15.6H3.3Z" fill="#1b6581"/><path d="M9.2 3.4V7.4H13.2Z" fill="#fafafa"/></svg><div class="a" style="left:95px;top:443.3px;width:1100px;height:1.7px;background:#c6d2d8"></div><div class="a" style="left:95px;top:445px;width:1px;height:170px;background:#dcdcdc"></div><div class="a" style="left:95px;top:471.8px;width:1100px;height:2px;background:#dcdcdc"></div><div class="a" style="left:96px;top:496.6px;width:1100px;height:22.6px;background:#babbb4"></div><div class="hl" style="top:496.1px"></div><div class="hl" style="top:519.2px"></div><div class="hl" style="top:542.3px"></div><div class="hl" style="top:565.4px"></div><div class="hl" style="top:588.5px"></div><div class="hl" style="top:611.6px"></div><div class="vl" style="left:130.6px;width:2px"></div><div class="vl" style="left:226px;width:1px"></div><div class="vl" style="left:320px;width:1px"></div><div class="vl" style="left:496px;width:1px"></div><div class="vl" style="left:742px;width:1px"></div><div class="vl" style="left:938px;width:1px"></div><div class="t" style="left:210.30px;top:451px;letter-spacing:0.000px;color:#9a9a9a;will-change:transform">ID</div><div class="t" style="left:231.00px;top:451px;letter-spacing:-0.027px;color:#9a9a9a;will-change:transform">ID позиции ...</div><div class="t" style="left:325.00px;top:451px;letter-spacing:0.325px;color:#9a9a9a;will-change:transform">Дата создания</div><div class="t" style="left:501.00px;top:451px;letter-spacing:0.202px;color:#9a9a9a;will-change:transform">Последняя синхронизация</div><div class="t" style="left:747.20px;top:451px;letter-spacing:0.289px;color:#9a9a9a;will-change:transform">Аккаунт маркетплейса</div><div class="t" style="left:942.70px;top:451px;letter-spacing:0.309px;color:#9a9a9a;will-change:transform">Дата продажи</div><div class="t" style="left:188.20px;top:477px;letter-spacing:-0.088px;color:#2e2e2e">59264</div><div class="t" style="left:281.90px;top:477px;letter-spacing:-0.025px;color:#2e2e2e">66511</div><div class="t" style="left:323.40px;top:477px;letter-spacing:0.021px;color:#2e2e2e">17.10.2025 07:05:23 pm</div><div class="t" style="left:499.90px;top:477px;letter-spacing:0.021px;color:#2e2e2e">17.10.2025 07:05:22 pm</div><div class="t" style="left:745.80px;top:477px;letter-spacing:-0.030px;color:#2e2e2e">amazon</div><div class="t" style="left:942.10px;top:477px;letter-spacing:0.021px;color:#2e2e2e">17.10.2025 06:38:12 pm</div><div class="t" style="left:188.20px;top:500px;letter-spacing:-0.088px;color:#2e2e2e">59261</div><div class="t" style="left:281.90px;top:500px;letter-spacing:-0.262px;color:#2e2e2e">66508</div><div class="t" style="left:323.40px;top:500px;letter-spacing:0.021px;color:#2e2e2e">17.10.2025 07:05:15 pm</div><div class="t" style="left:499.90px;top:500px;letter-spacing:0.021px;color:#2e2e2e">17.10.2025 07:05:15 pm</div><div class="t" style="left:745.80px;top:500px;letter-spacing:-0.140px;color:#2e2e2e">Ksaage</div><div class="t" style="left:942.10px;top:500px;letter-spacing:0.021px;color:#2e2e2e">17.10.2025 06:06:07 pm</div><div class="t" style="left:188.20px;top:523px;letter-spacing:-0.088px;color:#2e2e2e">59263</div><div class="t" style="left:281.90px;top:523px;letter-spacing:-0.262px;color:#2e2e2e">66510</div><div class="t" style="left:323.40px;top:523px;letter-spacing:0.021px;color:#2e2e2e">17.10.2025 07:05:23 pm</div><div class="t" style="left:499.90px;top:523px;letter-spacing:0.021px;color:#2e2e2e">17.10.2025 07:05:21 pm</div><div class="t" style="left:745.80px;top:523px;letter-spacing:-0.030px;color:#2e2e2e">amazon</div><div class="t" style="left:942.10px;top:523px;letter-spacing:0.021px;color:#2e2e2e">17.10.2025 06:04:44 pm</div><div class="t" style="left:188.20px;top:546px;letter-spacing:-0.088px;color:#2e2e2e">59262</div><div class="t" style="left:281.90px;top:546px;letter-spacing:-0.262px;color:#2e2e2e">66509</div><div class="t" style="left:323.40px;top:546px;letter-spacing:0.021px;color:#2e2e2e">17.10.2025 07:05:23 pm</div><div class="t" style="left:499.90px;top:546px;letter-spacing:0.021px;color:#2e2e2e">17.10.2025 07:05:19 pm</div><div class="t" style="left:745.80px;top:546px;letter-spacing:-0.030px;color:#2e2e2e">amazon</div><div class="t" style="left:942.10px;top:546px;letter-spacing:0.021px;color:#2e2e2e">17.10.2025 05:39:38 pm</div><div class="t" style="left:188.20px;top:569px;letter-spacing:-0.088px;color:#2e2e2e">59260</div><div class="t" style="left:281.90px;top:569px;letter-spacing:-0.262px;color:#2e2e2e">66507</div><div class="t" style="left:323.40px;top:569px;letter-spacing:0.021px;color:#2e2e2e">17.10.2025 05:29:53 pm</div><div class="t" style="left:499.90px;top:569px;letter-spacing:0.021px;color:#2e2e2e">17.10.2025 05:29:53 pm</div><div class="t" style="left:745.80px;top:569px;letter-spacing:-0.030px;color:#2e2e2e">amazon</div><div class="t" style="left:942.10px;top:569px;letter-spacing:0.021px;color:#2e2e2e">17.10.2025 05:16:34 pm</div><div class="t" style="left:188.20px;top:592px;letter-spacing:-0.088px;color:#2e2e2e">59259</div><div class="t" style="left:281.90px;top:592px;letter-spacing:-0.262px;color:#2e2e2e">66506</div><div class="t" style="left:323.40px;top:592px;letter-spacing:0.021px;color:#2e2e2e">17.10.2025 05:17:48 pm</div><div class="t" style="left:499.90px;top:592px;letter-spacing:0.021px;color:#2e2e2e">17.10.2025 05:17:46 pm</div><div class="t" style="left:745.80px;top:592px;letter-spacing:-0.030px;color:#2e2e2e">amazon</div><div class="t" style="left:942.10px;top:592px;letter-spacing:0.067px;color:#2e2e2e">17.10.2025 04:11:54 pm</div><div class="a" style="left:105.4px;top:449.5px;width:16.2px;height:16px;background:#fff;border:1px solid #d8d8d8;border-radius:2px"></div><div class="a" style="left:109.8px;top:453.9px;width:7.4px;height:7.2px;background:#1273b5"></div><div class="a" style="left:105.4px;top:498.5px;width:16.2px;height:15.8px;background:#fff;border-radius:2px"></div><svg class="a" style="left:105px;top:498px" width="17" height="17" viewBox="0 0 17 17" ><path d="M2.8 7.5L6.3 11.3L14.6 4.4" fill="none" stroke="#1273b5" stroke-width="1.5"/></svg></div><!--/table-->
<div id="tooltip"><div class="a" style="left:224.2px;top:38.7px;width:964.4px;height:37px;background:rgba(58,58,56,.93);border-radius:5.5px;box-shadow:0 1px 4px rgba(0,0,0,.18)"></div><svg class="a" style="left:363px;top:32.8px" width="10" height="6" viewBox="0 0 10 6" ><path d="M0 6L5 0L10 6Z" fill="#444442"/></svg><div class="t" style="left:235.30px;top:49px;letter-spacing:-0.279px;color:#fff;font-weight:700">Счет-фактура не может быть создан для текущей торговой площадки. Его можно изменить, обновив соответствующие настройки торговой площадки.</div></div><!--/tooltip-->
<div id="annot"><div class="a" style="left:1.5px;top:167.5px;width:86px;height:82px;border:3.2px solid #ff3b1c"></div><svg class="a" style="left:0;top:0" width="1189" height="607" viewBox="0 0 1189 607"><circle cx="369" cy="16.5" r="16.3" fill="#f5f5ac"/><g fill="#ff2d00" stroke="#fff" stroke-width="7.2" stroke-linejoin="round" paint-order="stroke"><path d="M350.6 16.7L384.3 -4L389 -6L382.9 0L372.1 10.1L446.5 13.6Q451.5 14.9 446.5 16.6L372.5 23L384.4 32.8Q385.2 34.6 382.4 35.3Z"/><path d="M282.1 77.3L262.4 108.4Q262.3 110.3 264 110.5L274.7 100.1L278.3 159.2Q280 163 281.6 159.2L288.2 100.1L298.3 111.2Q299.9 111.2 299.9 109.2Z"/><path d="M88.6 211.7L121.9 195.9Q123.9 195.7 123.9 197.6L111.3 207.7L180.9 219.3Q184.4 221 180.9 222.3L109.3 220.3L120.4 231.9Q120.5 233.6 118.4 233.6Z"/></g></svg></div><!--/annot-->
</body></html>
